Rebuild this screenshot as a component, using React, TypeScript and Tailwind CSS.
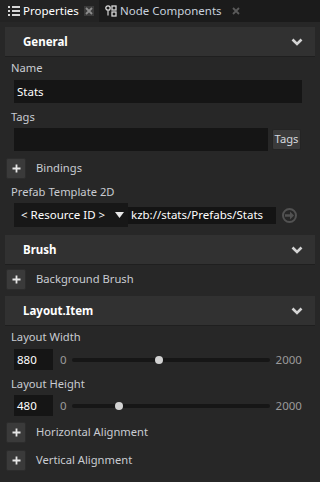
import { Fragment } from "react";

const FONT = { fontFamily: '"Noto Sans", "Open Sans", sans-serif' };

function Chevron() {
  return (
    <svg width="12" height="8" viewBox="0 0 12 8" className="mr-[12px]">
      <polyline points="1.5,1.5 6,6 10.5,1.5" fill="none" stroke="#d4d4d4" strokeWidth="2.6" />
    </svg>
  );
}

function SectionHeader({ title }: { readonly title: string }) {
  return (
    <div className="flex h-[30px] items-center justify-between border-b border-[#1f1f1f] bg-[#313131] pl-[18px]">
      <span className="text-[11.5px] font-bold text-white">{title}</span>
      <Chevron />
    </div>
  );
}

function PlusRow({ label, className }: { readonly label: string; readonly className: string }) {
  return (
    <div className={`flex items-center ${className}`}>
      <div className="ml-[1px] flex h-[21px] w-[20px] items-center justify-center rounded-[2px] border border-[#2c2c2c] bg-[#3a3a3a]">
        <svg width="9" height="9" viewBox="0 0 9 9">
          <path d="M4.5 0.5v8M0.5 4.5h8" stroke="#e6e6e6" strokeWidth="1.8" />
        </svg>
      </div>
      <span className="ml-[10px] text-[11.2px] text-[#c9ccd2]">{label}</span>
    </div>
  );
}

function Label({ text, className }: { readonly text: string; readonly className: string }) {
  return <div className={`h-[16px] pl-[6px] text-[11.2px] leading-[16px] text-[#c9ccd2] ${className}`}>{text}</div>;
}

function SliderRow({ value, max, className }: { readonly value: number; readonly max: number; readonly className: string }) {
  const pct = (value / max) * 100;
  return (
    <div className={`flex h-[21px] items-center pl-[9px] ${className}`}>
      <div className="flex h-[21px] w-[39px] items-center bg-[#151515] pl-[3px] text-[11.5px] text-white">{value}</div>
      <span className="ml-[7px] text-[11.5px] text-[#9a9a9a]">0</span>
      <div className="relative ml-[5px] h-[4px] w-[198px] rounded-full bg-[#161616]">
        <div
          className="absolute top-1/2 h-[8px] w-[8px] -translate-x-1/2 -translate-y-1/2 rounded-full bg-[#d2d2d2]"
          style={{ left: `${pct}%` }}
        />
      </div>
      <span className="ml-[6px] text-[11.5px] text-[#9a9a9a]">{max}</span>
    </div>
  );
}

export default function App() {
  return (
    <div className="h-[482px] w-[320px] overflow-hidden bg-[#272727]" style={FONT}>
      <div className="flex h-[22px] bg-[#1b1b1b]">
        <div className="flex w-[99px] items-center bg-[#232323] pl-[8px]">
          <svg width="12" height="10" viewBox="0 0 12 10">
            {[1, 5, 9].map((y) => (
              <Fragment key={y}>
                <rect x="0" y={y - 1} width="2" height="2" fill="#d8d8d8" />
                <rect x="4" y={y - 1} width="8" height="2" fill="#d8d8d8" />
              </Fragment>
            ))}
          </svg>
          <span className="ml-[3px] text-[11.5px] text-white">Properties</span>
          <div className="ml-auto mr-[5px] flex h-[10px] w-[10px] items-center justify-center bg-[#3a3a3a]">
            <svg width="8" height="8" viewBox="0 0 8 8">
              <path d="M1 1l6 6M7 1l-6 6" stroke="#8c8c8c" strokeWidth="1.8" />
            </svg>
          </div>
        </div>
        <div className="flex items-center pl-[6px]">
          <svg width="12" height="12" viewBox="0 0 12 12">
            <circle cx="3" cy="3" r="2.2" fill="none" stroke="#d8d8d8" strokeWidth="1.3" />
            <rect x="2.4" y="5.5" width="1.2" height="5" fill="#d8d8d8" />
            <rect x="7" y="1" width="4" height="4" fill="none" stroke="#d8d8d8" strokeWidth="1.3" />
            <rect x="7" y="7" width="4" height="4" fill="none" stroke="#d8d8d8" strokeWidth="1.3" />
          </svg>
          <span className="ml-[3px] text-[11.5px] text-[#c9d2de]">Node Components</span>
          <svg width="8" height="8" viewBox="0 0 8 8" className="ml-[10px]">
            <path d="M1 1l6 6M7 1l-6 6" stroke="#5a5a5a" strokeWidth="1.8" />
          </svg>
        </div>
      </div>

      <div className="px-[5px] pt-[5px]">
        <SectionHeader title="General" />
        <Label text="Name" className="mt-[3px]" />
        <div className="ml-[9px] mt-[4px] flex h-[23px] w-[288px] items-center bg-[#151515] pl-[3px] text-[11.5px] text-white">
          Stats
        </div>
        <Label text="Tags" className="mt-[6px]" />
        <div className="mt-[3px] flex h-[23px] items-center pl-[9px]">
          <div className="h-[23px] w-[254px] bg-[#151515]" />
          <div className="ml-[4px] flex h-[21px] w-[29px] items-center justify-center rounded-[2px] border border-[#242424] bg-[#3a3a3a] text-[11.2px] text-[#d4d8de]">
            Tags
          </div>
        </div>
        <PlusRow label="Bindings" className="mt-[7px]" />
        <Label text="Prefab Template 2D" className="mt-[5px]" />
        <div className="mt-[3px] flex h-[24px] items-center pl-[9px]">
          <div className="flex h-[24px] w-[114px] items-center bg-[#171717] pl-[7px] text-[11.5px] text-white">
            <span>&lt; Resource ID &gt;</span>
            <svg width="9" height="6" viewBox="0 0 9 6" className="ml-auto mr-[4px]">
              <path d="M0 0h9L4.5 6z" fill="#e8e8e8" />
            </svg>
          </div>
          <div className="flex h-[17px] w-[148px] items-center bg-[#141414] pl-[3px] text-[11.5px] text-white">
            kzb://stats/Prefabs/Stats
          </div>
          <svg width="15" height="15" viewBox="0 0 15 15" className="ml-[6px]">
            <circle cx="7.5" cy="7.5" r="6.5" fill="none" stroke="#525252" strokeWidth="2" />
            <path d="M3 6.3h5V3.5l4 4-4 4V8.7H3z" fill="#525252" />
          </svg>
        </div>
        <div className="mt-[8px]">
          <SectionHeader title="Brush" />
        </div>
        <PlusRow label="Background Brush" className="mt-[4px]" />
        <div className="mt-[6px]">
          <SectionHeader title="Layout.Item" />
        </div>
        <Label text="Layout Width" className="mt-[3px]" />
        <SliderRow value={880} max={2000} className="mt-[4px]" />
        <Label text="Layout Height" className="mt-[6px]" />
        <SliderRow value={480} max={2000} className="mt-[3px]" />
        <PlusRow label="Horizontal Alignment" className="mt-[6px]" />
        <PlusRow label="Vertical Alignment" className="mt-[7px]" />
      </div>
    </div>
  );
}
